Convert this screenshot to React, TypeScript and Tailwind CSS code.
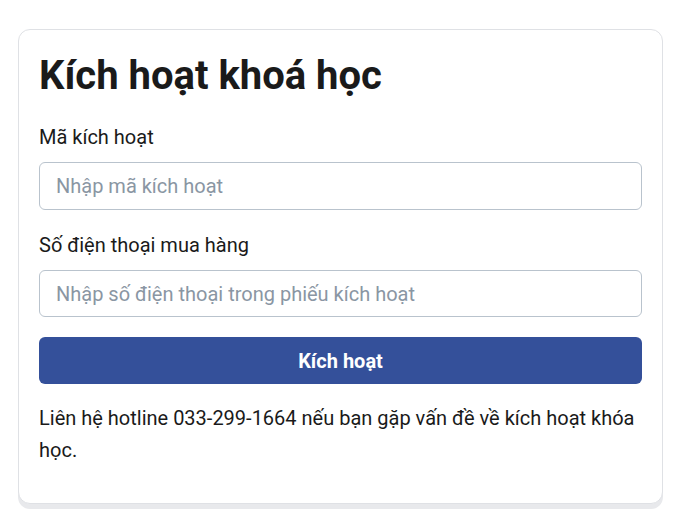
import React from 'react';

export default function App() {
  return (
    <div className="min-h-screen bg-white pt-[29px] px-[18px] font-['Roboto',sans-serif] text-[#1a1a1a]">
      <div className="w-[645px] bg-white border border-[#dfe1e5] rounded-xl shadow-[0_5px_0_#e8e9ec] px-5 pt-[22px] pb-[37px]">
        <h1 className="text-[40px] leading-[48px] font-bold text-[#1a1a1a] mb-[23px]">Kích hoạt khoá học</h1>

        <label className="block text-[20px] leading-[28px] mb-[11px]">Mã kích hoạt</label>
        <input
          type="text"
          placeholder="Nhập mã kích hoạt"
          className="block w-full h-[48px] px-4 text-[20px] border border-[#b9c3cd] rounded-md outline-none placeholder:text-[#8a96a3]"
        />

        <label className="block text-[20px] leading-[28px] mt-[21px] mb-[11px]">Số điện thoại mua hàng</label>
        <input
          type="text"
          placeholder="Nhập số điện thoại trong phiếu kích hoạt"
          className="block w-full h-[47px] px-4 text-[20px] border border-[#b9c3cd] rounded-md outline-none placeholder:text-[#8a96a3]"
        />

        <button className="block w-full h-[47px] mt-[20px] bg-[#34509a] text-white text-[20px] font-bold rounded-md">
          Kích hoạt
        </button>

        <p className="mt-[18px] text-[20px] leading-[32px]">
          Liên hệ hotline 033-299-1664 nếu bạn gặp vấn đề về kích hoạt khóa học.
        </p>
      </div>
    </div>
  );
}
